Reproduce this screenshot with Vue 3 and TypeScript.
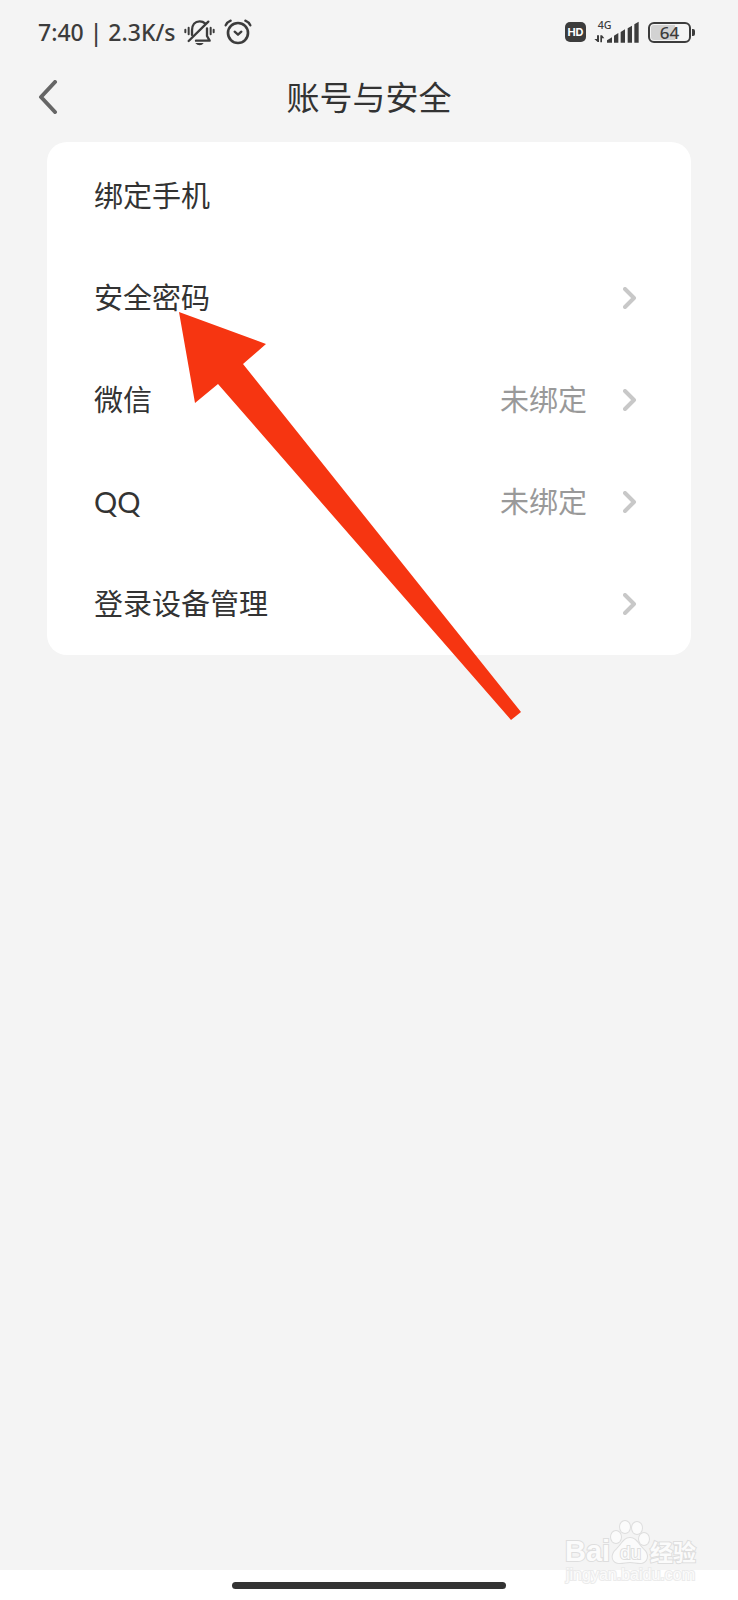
<script setup lang="ts">
interface Item {
  label: string
  value?: string
  link: boolean
}

const items: Item[] = [
  { label: '绑定手机', link: false },
  { label: '安全密码', link: true },
  { label: '微信', value: '未绑定', link: true },
  { label: 'QQ', value: '未绑定', link: true },
  { label: '登录设备管理', link: true },
]
</script>

<template>
  <div class="page">
    <div class="status">
      <span class="clock">7:40 | 2.3K/s</span>
      <svg class="bell" viewBox="0 0 93 81" aria-hidden="true">
        <g fill="none" stroke="#3c3c3c" stroke-width="6" stroke-linecap="round">
          <path d="M4 32v8M14 26v20M80 26v20M89 32v8" />
          <path d="M24 48V34C24 17 33 7 47 7c7 0 12 2 16 6" stroke-width="7" />
          <path d="M69 28v23l8 14H36" stroke-width="7" stroke-linejoin="round" />
          <path d="M14 66L73 8" stroke-width="7" />
        </g>
        <path d="M34 72h25q-4 7-12 7t-13-7z" fill="#3c3c3c" />
      </svg>
      <svg class="alarm" viewBox="0 0 84 78" aria-hidden="true">
        <g fill="none" stroke="#3c3c3c" stroke-width="8" stroke-linecap="round" stroke-linejoin="round">
          <circle cx="42" cy="42" r="30" />
          <path d="M32 38l10 9 10-9" stroke-width="7" />
          <path d="M5 19Q10 9 20 5M79 19Q74 9 64 5" stroke-width="7" />
        </g>
      </svg>
      <span class="spacer"></span>
      <span class="hd">HD</span>
      <svg class="signal" viewBox="0 -18 138 108" aria-hidden="true">
        <text x="11" y="26" class="net">4G</text>
        <g fill="#3c3c3c">
          <path d="M39 68v-7l15-9v16zM60 68V47l13-8v29zM80 68V36l13-8v40zM101 68V25l13-8v51zM121 68V13l13-8v63z" />
          <path d="M9 46h6v20h-4L1 57h8zM19 46h5l7 9h-7v12h-5z" />
        </g>
      </svg>
      <span class="battery"><span class="level">64</span></span>
    </div>

    <header class="head">
      <button class="back" type="button" aria-label="返回">
        <svg viewBox="0 0 20 34" aria-hidden="true">
          <path d="M17 2L3 17l14 15" fill="none" stroke="#666" stroke-width="4" stroke-linecap="round" stroke-linejoin="round" />
        </svg>
      </button>
      <h1>账号与安全</h1>
    </header>

    <main class="card">
      <ul>
        <li v-for="item in items" :key="item.label">
          <component :is="item.link ? 'button' : 'div'" class="row" :type="item.link ? 'button' : undefined">
            <span class="label">{{ item.label }}</span>
            <span v-if="item.value" class="value">{{ item.value }}</span>
            <svg v-if="item.link" class="chevron" viewBox="0 0 14 22" aria-hidden="true">
              <path d="M2 2l9 9-9 9" fill="none" stroke="#c8c8c8" stroke-width="4" stroke-linecap="round" stroke-linejoin="round" />
            </svg>
          </component>
        </li>
      </ul>
      <svg class="pointer" viewBox="0 0 343 408" aria-hidden="true">
        <path d="M0 0l87 32-23 20 278 348-10 8L39 72 16 91z" fill="#f63511" />
      </svg>
    </main>

    <footer class="nav"><span class="pill"></span></footer>

    <svg class="mark" viewBox="0 0 144 74" aria-hidden="true">
      <g fill="#fbfbfb" stroke="#dedede" stroke-width="2" paint-order="stroke">
        <text x="5" y="46" class="bai">Bai</text>
        <ellipse cx="56" cy="22" rx="5" ry="6" />
        <ellipse cx="65" cy="12" rx="5" ry="6" />
        <ellipse cx="77" cy="13" rx="5" ry="6" />
        <ellipse cx="84" cy="24" rx="5" ry="6" />
        <path d="M70 23c6 0 8 6 13 11 7 6 4 14-3 14-4 0-6-1-10-1s-6 1-10 1c-8 0-10-8-3-14 5-5 7-11 13-11z" />
        <text x="60" y="44" class="du">du</text>
        <text x="90" y="46" class="cn">经验</text>
        <text x="6" y="65" class="url">jingyan.baidu.com</text>
      </g>
    </svg>
  </div>
</template>

<style>
body {
  margin: 0;
  background: #f4f4f4;
}
</style>

<style scoped>
.page {
  position: relative;
  display: flex;
  flex-direction: column;
  min-height: 100vh;
  background: #f4f4f4;
  color: #333;
  font-family: Lato, "Noto Sans CJK SC", sans-serif;
}
.status {
  display: flex;
  align-items: center;
  height: 64px;
  padding: 0 42px 0 38px;
  color: #3c3c3c;
}
.clock {
  font: 500 23px/32px "Noto Sans", sans-serif;
  white-space: nowrap;
}
.bell {
  width: 31px;
  height: 27px;
  margin-left: 8px;
}
.alarm {
  width: 28px;
  height: 26px;
  margin-left: 9px;
}
.spacer {
  flex: 1;
}
.hd {
  width: 21px;
  border-radius: 5px;
  background: #3c3c3c;
  color: #fff;
  font: 700 11px/20px Inter, sans-serif;
  text-align: center;
}
.signal {
  width: 46px;
  height: 36px;
  margin: 0 8px;
}
.net {
  font: 500 32px "Noto Sans", sans-serif;
  fill: #3c3c3c;
}
.battery {
  position: relative;
  box-sizing: border-box;
  width: 43px;
  height: 21px;
  margin-right: 5px;
  padding: 1px;
  border: 2px solid #3c3c3c;
  border-radius: 6px;
}
.battery::after {
  content: "";
  position: absolute;
  top: 5px;
  right: -6px;
  width: 3px;
  height: 7px;
  border-radius: 0 2px 2px 0;
  background: #3c3c3c;
}
.level {
  display: block;
  border-radius: 3px;
  background: linear-gradient(90deg, #d2d2d2 64%, transparent 64%);
  font: 500 17px/15px "Noto Sans", sans-serif;
  text-align: center;
}
.head {
  display: grid;
  grid-template-columns: 1fr auto 1fr;
  align-items: center;
  height: 66px;
  padding: 0 38px;
}
.back {
  justify-self: start;
  display: flex;
  padding: 0;
  border: 0;
  background: none;
}
.back svg {
  width: 20px;
  height: 34px;
}
h1 {
  margin: 0;
  font-size: 33px;
  font-weight: 400;
  line-height: 48px;
}
.card {
  position: relative;
  margin: 12px 47px 0;
  padding-top: 3px;
  border-radius: 20px;
  background: #fff;
}
ul {
  margin: 0;
  padding: 0;
  list-style: none;
}
.row {
  display: flex;
  align-items: center;
  box-sizing: border-box;
  width: 100%;
  height: 102px;
  padding: 0 54px 0 47px;
  border: 0;
  background: none;
  color: #333;
  font: inherit;
  font-size: 29px;
  line-height: 40px;
  text-align: left;
}
.label {
  flex: 1;
}
.value {
  color: #999;
}
.chevron {
  width: 14px;
  height: 22px;
  margin-left: 36px;
}
.pointer {
  position: absolute;
  top: 170px;
  left: 132px;
  width: 343px;
  height: 408px;
  pointer-events: none;
}
.nav {
  display: flex;
  align-items: center;
  justify-content: center;
  height: 30px;
  margin-top: auto;
  background: #fff;
}
.pill {
  width: 37%;
  height: 7px;
  border-radius: 4px;
  background: #333;
}
.mark {
  position: absolute;
  right: 34px;
  bottom: 11px;
  width: 144px;
  height: 74px;
}
.bai {
  font: 700 29px "Liberation Sans", sans-serif;
}
.du {
  font: 400 19px "Liberation Sans", sans-serif;
}
.cn {
  font: 700 23px "Noto Sans CJK SC", sans-serif;
}
.url {
  font: 400 16px "Liberation Sans", sans-serif;
  stroke: #ebebeb;
}
</style>
